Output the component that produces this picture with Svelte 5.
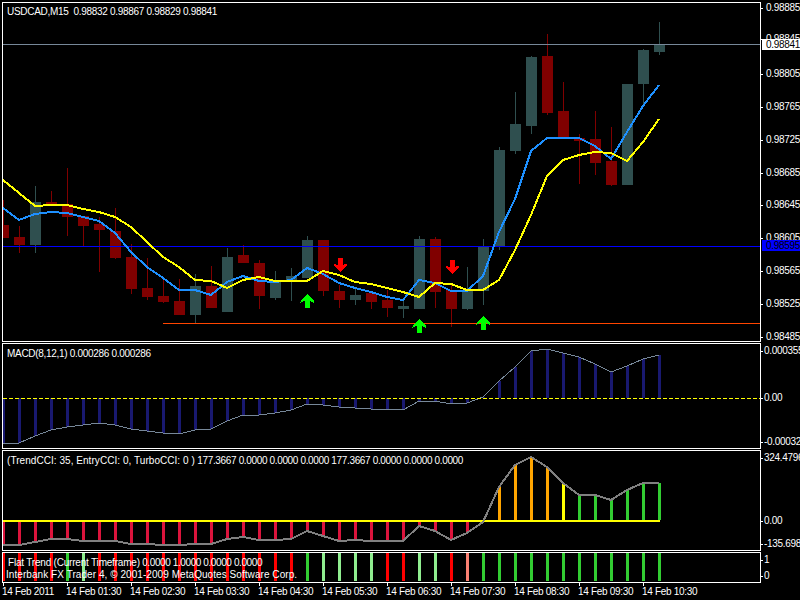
<script>
    // bar k sits at x = 3 + 16k on every pane
    const barX = (k) => 3 + 16 * k;

    // [type, bodyTop, bodyBottom, wickTop, wickBottom], 1 = bull (teal), 0 = bear (maroon)
    const candles = [
        [0, 225, 238, 200, 238], [0, 237, 245, 226, 253], [1, 202, 245, 186, 253], [0, 202, 205, 191, 206],
        [0, 204, 217, 168, 236], [0, 216, 226, 216, 246], [0, 224, 230, 217, 272], [0, 231, 258, 208, 259],
        [0, 257, 289, 244, 294], [0, 288, 297, 258, 300], [0, 296, 302, 280, 303], [0, 301, 315, 279, 315],
        [1, 286, 315, 274, 323], [0, 286, 308, 266, 308], [1, 257, 312, 248, 312], [0, 255, 263, 245, 263],
        [0, 263, 296, 260, 309], [1, 282, 298, 271, 300], [1, 276, 281, 268, 301], [1, 240, 278, 236, 278],
        [0, 240, 291, 240, 296], [0, 291, 300, 285, 308], [1, 295, 300, 289, 305], [0, 293, 302, 293, 309],
        [0, 300, 308, 290, 317], [1, 306, 309, 298, 318], [1, 239, 309, 236, 309], [0, 239, 292, 237, 308],
        [0, 290, 309, 284, 327], [1, 290, 309, 267, 310], [1, 246, 291, 239, 305], [1, 150, 246, 147, 250],
        [1, 124, 151, 92, 154], [1, 57, 126, 56, 134], [0, 56, 113, 34, 115], [0, 111, 138, 82, 138],
        [0, 138, 141, 134, 184], [0, 139, 163, 111, 175], [0, 161, 185, 127, 186], [1, 84, 185, 84, 185],
        [1, 50, 84, 49, 107], [1, 44, 52, 22, 55],
    ];

    const yellowMa = [
        180, 193, 206, 205, 205, 209, 212, 217, 227, 242, 257, 267, 280, 281, 288, 280, 277, 281, 281, 281, 271,
        275, 282, 284, 288, 292, 297, 283, 284, 290, 290, 280, 250, 215, 176, 160, 155, 152, 153, 161, 142, 119,
    ];
    const blueMa = [
        208, 220, 214, 212, 213, 217, 221, 233, 252, 267, 278, 290, 290, 295, 282, 276, 281, 282, 280, 268, 274,
        283, 288, 292, 297, 300, 280, 283, 291, 291, 276, 232, 199, 151, 138, 138, 138, 146, 159, 132, 106, 85,
    ];
    const macd = [
        443, 443, 436, 430, 427, 425, 423, 425, 429, 431, 433, 434, 430, 429, 421, 415, 415, 413, 410, 404, 405,
        407, 408, 409, 409, 410, 401, 401, 404, 403, 397, 381, 367, 351, 349, 353, 357, 364, 372, 366, 359, 355,
    ];
    const cci = [
        545, 545, 542, 539, 539, 541, 541, 541, 544, 544, 545, 545, 544, 544, 539, 537, 540, 540, 539, 531, 536,
        541, 540, 541, 541, 541, 526, 531, 540, 533, 522, 487, 465, 457, 467, 483, 495, 495, 500, 490, 483, 483,
    ];

    function cciColor(k) {
        if (k < 31) return "#dc143c";
        if (k < 35) return "#ffa500";
        if (k === 35) return "#ffff00";
        return "#32cd32";
    }

    const R = "#ff0000";
    const G = "#32cd32";
    const L = "#90ee90";
    const S = "#fa8072";
    const trend = [
        R, R, R, R, G, L, R, R, R, R, R, R, R, R, R, R, R, R, R, G, L, L, L, L, R, R, L, L, R, S, G, G, G, G, G,
        G, G, G, G, G, G, G,
    ];

    const line = (values) => values.map((y, k) => `${barX(k)},${y}`).join(" ");

    const upArrows = [[307, 294], [419, 319], [483, 316]];
    const downArrows = [[340, 258], [452, 260]];

    const priceScale = [
        ["0.98885", 7], ["0.98845", 38], ["0.98805", 73], ["0.98765", 106], ["0.98725", 139], ["0.98685", 172],
        ["0.98645", 204], ["0.98605", 237], ["0.98565", 270], ["0.98525", 303], ["0.98485", 336],
    ];
    const macdScale = [["0.000355", 351], ["0.00", 398], ["-0.000325", 442]];
    const cciScale = [["324.4796", 457], ["0.00", 520], ["-135.698", 543]];
    const trendScale = [["1", 559], ["0", 575]];

    const times = [
        "14 Feb 2011", "14 Feb 01:30", "14 Feb 02:30", "14 Feb 03:30", "14 Feb 04:30", "14 Feb 05:30",
        "14 Feb 06:30", "14 Feb 07:30", "14 Feb 08:30", "14 Feb 09:30", "14 Feb 10:30",
    ];
</script>

<div class="screen">
    <div class="pane main">
        <div class="plot">
            <svg width="757" height="338" viewBox="3 3 757 338" shape-rendering="crispEdges">
                {#each candles as [bull, top, bottom, wickTop, wickBottom], k}
                    <rect x={barX(k)} y={wickTop} width="1" height={wickBottom - wickTop} fill={bull ? "#2f4f4f" : "#800000"} />
                    <rect x={barX(k) - 5} y={top} width="11" height={bottom - top} fill={bull ? "#2f4f4f" : "#800000"} />
                {/each}
                <rect x="3" y="44" width="757" height="1" fill="#778899" />
                <rect x="3" y="246" width="757" height="1" fill="#0000ff" />
                <rect x="163" y="323" width="597" height="1" fill="#ff4500" />
                <polyline points={line(blueMa)} fill="none" stroke="#1e90ff" stroke-width="2" />
                <polyline points={line(yellowMa)} fill="none" stroke="#ffff00" stroke-width="2" />
                {#each upArrows as [x, y]}
                    <polygon transform="translate({x},{y})" points="0,0 6.5,6.5 6.5,8.5 2.5,7 2.5,14 -2.5,14 -2.5,7 -6.5,8.5 -6.5,6.5" fill="#00ff00" />
                {/each}
                {#each downArrows as [x, y]}
                    <polygon transform="translate({x},{y})" points="-2.5,0 2.5,0 2.5,7 6.5,5.5 6.5,7.5 0,14 -6.5,7.5 -6.5,5.5 -2.5,7" fill="#ff0000" />
                {/each}
            </svg>
            <div class="title">USDCAD,M15  0.98832 0.98867 0.98829 0.98841</div>
        </div>
        <div class="axis">
            {#each priceScale as [label, y]}
                <span class="tick price" style="top:{y - 7}px">{label}</span>
            {/each}
            <span class="tag now" style="top:37px">0.98841</span>
            <span class="tag level" style="top:238px">0.98595</span>
        </div>
    </div>

    <div class="pane macd">
        <div class="plot">
            <svg width="757" height="104" viewBox="3 344 757 104" shape-rendering="crispEdges">
                {#each macd as y, k}
                    {#if y > 398}
                        <rect x={barX(k) - 1} y="398" width="3" height={y - 398} fill="#191970" />
                    {:else}
                        <rect x={barX(k) - 1} y={y} width="3" height={398 - y} fill="#191970" />
                    {/if}
                {/each}
                <polyline points={line(macd)} fill="none" stroke="#778899" stroke-width="1" />
                <line x1="3" y1="398.5" x2="760" y2="398.5" stroke="#ffff00" stroke-dasharray="4 2" />
            </svg>
            <div class="title">MACD(8,12,1) 0.000286 0.000286</div>
        </div>
        <div class="axis">
            {#each macdScale as [label, y]}
                <span class="tick" style="top:{y - 349}px">{label}</span>
            {/each}
        </div>
    </div>

    <div class="pane cci">
        <div class="plot">
            <svg width="757" height="99" viewBox="3 451 757 99" shape-rendering="crispEdges">
                {#each cci as y, k}
                    {#if y > 520}
                        <rect x={barX(k) - 1} y="520" width="3" height={y - 520} fill={cciColor(k)} />
                    {:else}
                        <rect x={barX(k) - 1} y={y} width="3" height={520 - y} fill={cciColor(k)} />
                    {/if}
                {/each}
                <rect x="3" y="520" width="657" height="2" fill="#ffff00" />
                <polyline points={line(cci)} fill="none" stroke="#808080" stroke-width="2" />
            </svg>
            <div class="title"><span class="params">(TrendCCI: 35, EntryCCI: 0, TurboCCI: 0 )</span>  177.3667 0.0000 0.0000 0.0000 177.3667 0.0000 0.0000 0.0000</div>
        </div>
        <div class="axis">
            {#each cciScale as [label, y]}
                <span class="tick" style="top:{y - 455}px">{label}</span>
            {/each}
        </div>
    </div>

    <div class="pane trend">
        <div class="plot">
            <svg width="757" height="29" viewBox="3 553 757 29" shape-rendering="crispEdges">
                {#each trend as color, k}
                    <rect x={barX(k) - 1} y="553" width="3" height="28" fill={color} />
                {/each}
            </svg>
            <div class="legend">
                <div class="flat"><span class="flat-name">Flat Trend (Current Timeframe)</span> 0.0000 1.0000 0.0000 0.0000</div>
                <div class="broker">Interbank FX Trader 4, © 2001-2009 MetaQuotes Software Corp.</div>
            </div>
        </div>
        <div class="axis">
            {#each trendScale as [label, y]}
                <span class="tick" style="top:{y - 557}px">{label}</span>
            {/each}
        </div>
    </div>

    <div class="times">
        {#each times as time}
            <span class="time">{time}</span>
        {/each}
    </div>
</div>

<style>
    :global(body) {
        background: #000;
    }

    .screen {
        width: 800px;
        height: 600px;
        padding-top: 2px;
        box-sizing: border-box;
        display: flex;
        flex-direction: column;
        gap: 1px;
        background: #000;
        color: #fff;
        overflow: hidden;
        font-family: "Liberation Sans", sans-serif;
        font-size: 10px;
        letter-spacing: -0.3px;
    }

    .pane {
        display: flex;
        flex: none;
    }

    .main {
        height: 340px;
    }

    .macd {
        height: 106px;
    }

    .cci {
        height: 101px;
    }

    .trend {
        height: 31px;
    }

    .plot {
        position: relative;
        box-sizing: border-box;
        width: 759px;
        margin-left: 2px;
        border: 1px solid #fff;
    }

    .plot svg {
        display: block;
    }

    .title {
        position: absolute;
        top: 3px;
        left: 4px;
        line-height: 12px;
        white-space: pre;
    }

    .macd .title,
    .cci .title {
        top: 4px;
    }

    .cci .title {
        letter-spacing: -0.35px;
    }

    .params {
        letter-spacing: 0.05px;
    }

    .legend {
        position: absolute;
        top: 4px;
        left: 3px;
        line-height: 12px;
    }

    .legend > div {
        white-space: pre;
    }

    .flat {
        margin-left: 2px;
        letter-spacing: -0.4px;
    }

    .flat-name {
        letter-spacing: -0.2px;
    }

    .broker {
        letter-spacing: 0.06px;
    }

    .axis {
        position: relative;
        flex: 1;
        overflow: hidden;
    }

    .tick,
    .tag {
        position: absolute;
        left: 0;
        height: 12px;
        line-height: 12px;
        padding-left: 3px;
        white-space: pre;
    }

    .price {
        padding-left: 5px;
    }

    .tick::before {
        content: "";
        position: absolute;
        left: 0;
        top: 6px;
        width: 2px;
        height: 1px;
        background: #fff;
    }

    .tag {
        left: 1px;
        right: 0;
        height: 11px;
        line-height: 11px;
        padding-left: 4px;
        color: #000;
    }

    .now {
        background: #fff;
    }

    .level {
        background: #0000ff;
    }

    .times {
        display: flex;
        margin-left: 2px;
        line-height: 12px;
        padding-top: 2px;
    }

    .time {
        position: relative;
        flex: none;
        width: 64px;
        white-space: pre;
    }

    .time::before {
        content: "";
        position: absolute;
        left: 1px;
        top: -3px;
        width: 1px;
        height: 3px;
        background: #fff;
    }
</style>
